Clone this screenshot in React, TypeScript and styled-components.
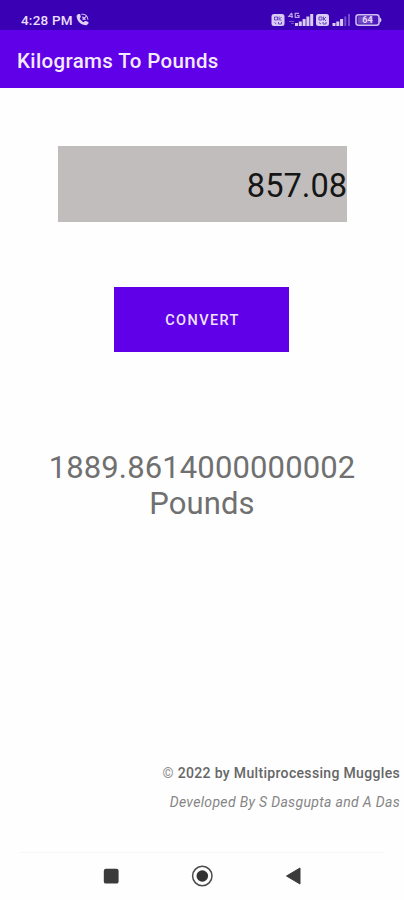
import React from "react";
import styled, { createGlobalStyle } from "styled-components";

const GlobalStyle = createGlobalStyle`
  * { box-sizing: border-box; }
  body { margin: 0; background: #fefefe; font-family: Roboto, sans-serif; }
`;

const Screen = styled.div`
  width: 404px;
  height: 900px;
  display: flex;
  flex-direction: column;
  background: #fefefe;
  overflow: hidden;
`;

const StatusBar = styled.header`
  height: 30px;
  flex: none;
  display: flex;
  align-items: flex-start;
  padding: 12px 21px 0 21px;
  background: #3a00b3;
  color: #e9defa;
`;

const Clock = styled.span`
  font-size: 13.5px;
  font-weight: 500;
  line-height: 17px;
  letter-spacing: 0.2px;
  white-space: nowrap;
`;

const CallIcon = styled.svg`
  margin: 1px 0 0 3px;
`;

const StatusIcons = styled.svg`
  margin-left: auto;
`;

const AppBar = styled.div`
  height: 58px;
  flex: none;
  display: flex;
  align-items: center;
  padding: 3px 17px 0;
  background: #6000e9;
`;

const Title = styled.h1`
  margin: 0;
  color: #f3eafd;
  font-size: 20.5px;
  font-weight: 500;
  letter-spacing: 0.36px;
  white-space: nowrap;
`;

const Content = styled.main`
  flex: 1;
  display: flex;
  flex-direction: column;
  align-items: center;
`;

const Amount = styled.input`
  width: 289px;
  height: 76px;
  margin: 58px 0 0 1px;
  padding: 3px 0 0;
  border: 0;
  outline: 0;
  border-radius: 0;
  background: #c0bdbc;
  color: #161616;
  font: 400 32.6px Roboto, sans-serif;
  text-align: right;
`;

const ConvertButton = styled.button`
  width: 175px;
  height: 65px;
  margin: 65px 1px 0 0;
  padding: 1px 0 0 2px;
  border: 0;
  background: #6000e9;
  color: #efe3fd;
  font: 500 14.5px Roboto, sans-serif;
  letter-spacing: 1.4px;
`;

const Result = styled.p`
  width: 330px;
  margin: 98px 0 0;
  color: #707070;
  font-size: 31px;
  line-height: 36px;
  letter-spacing: 0.13px;
  text-align: center;
`;

const Footer = styled.footer`
  align-self: stretch;
  margin-top: auto;
  padding: 0 4px 40px 0;
  display: flex;
  flex-direction: column;
  align-items: flex-end;
  gap: 9px;
  font-size: 14px;
  line-height: 20px;
  letter-spacing: 0.33px;
  white-space: nowrap;
`;

const Copyright = styled.span`
  color: #666;
  font-weight: 500;
`;

const CopyrightSign = styled.span`
  color: #8c8c8c;
  font-weight: 400;
`;

const Credits = styled.span`
  color: #858585;
  font-style: italic;
`;

const NavBar = styled.nav`
  height: 48px;
  flex: none;
  margin: 0 20px;
  padding-bottom: 2px;
  border-top: 1px solid #f6f6f6;
  display: flex;
  justify-content: center;
  align-items: center;
  gap: 69px;
`;

const NavIcon = styled.svg`
  width: 22px;
  height: 22px;
  flex: none;
`;

function SimBadge({ x }: { x: number }) {
  return (
    <g transform={`translate(${x} 2)`}>
      <rect width="13" height="12" rx="2.5" fill="#d8ccf4" />
      <path d="M3 3h3v3H3zM7.5 2.5v4M10 3 8 5l2 2M3 8.5l2 1.5M7 8v2h3V8" fill="none" stroke="#5325bd" strokeWidth="0.8" />
    </g>
  );
}

function Signals() {
  return (
    <StatusIcons width="112" height="16" viewBox="0 0 112 16">
      <SimBadge x={0.5} />
      <g fill="none" stroke="#b8a1e8" strokeWidth="1.2">
        <path d="M20.8 .8 17.800 4.500h4.200M21 1.500V6M28 1.400h-3.800v4H28V3.500H26" />
        <path d="M18 9.500h5M20 11.500h3" stroke="#7851cb" />
      </g>
      <g fill="#d8ccf4">
        <rect x="24" y="11" width="3" height="3" />
        <rect x="27.800" y="9.500" width="3" height="4.500" />
        <rect x="31.600" y="7" width="3" height="7" />
        <rect x="35.400" y="4.500" width="3" height="9.500" />
        <rect x="39.200" y="2" width="3" height="12" />
      </g>
      <SimBadge x={45} />
      <g fill="#d8ccf4">
        <rect x="61.500" y="11" width="3" height="3" />
        <rect x="65.300" y="9.500" width="3" height="4.500" />
        <rect x="69.100" y="7" width="3" height="7" />
        <rect x="73.300" y="4.500" width="2" height="9.500" fill="#754ccb" />
        <rect x="77" y="2" width="2" height="12" fill="#754ccb" />
      </g>
      <rect x="85" y="2.700" width="23" height="10.600" rx="2.500" fill="#4b1abb" stroke="#d0c0f2" strokeWidth="1.500" />
      <rect x="87" y="4.500" width="15" height="7" fill="#7148c8" />
      <path d="M108.500 5q4 3 0 6z" fill="#d8ccf4" />
      <text x="96.500" y="11.200" textAnchor="middle" fontFamily="Roboto, sans-serif" fontSize="9" fontWeight="700" fill="#e5daf8">64</text>
    </StatusIcons>
  );
}

export default function App() {
  return (
    <>
      <GlobalStyle />
      <Screen>
        <StatusBar>
          <Clock>4:28 PM</Clock>
          <CallIcon width="13" height="13" viewBox="0 0 24 24">
            <path
              d="M4 2 1 5C1.500 15 9 22.500 19.500 22.500L23 19.500v-3l-6-2-3 2.500C11 15 8.500 13 7 10L9 7 7.500 2z"
              fill="#dfd1f6"
            />
            <path d="M10 2.500q11-1 12 10M11 7.500q5 0 6 5M19 6l-6 6M13 8v4h4" fill="none" stroke="#c7b2ec" strokeWidth="2" />
          </CallIcon>
          <Signals />
        </StatusBar>
        <AppBar>
          <Title>Kilograms To Pounds</Title>
        </AppBar>
        <Content>
          <Amount type="text" defaultValue="857.08" aria-label="Kilograms" />
          <ConvertButton type="button">CONVERT</ConvertButton>
          <Result>1889.8614000000002 Pounds</Result>
          <Footer>
            <Copyright>
              <CopyrightSign>©</CopyrightSign> 2022 by Multiprocessing Muggles
            </Copyright>
            <Credits>Developed By S Dasgupta and A Das</Credits>
          </Footer>
        </Content>
        <NavBar>
          <NavIcon viewBox="0 0 22 22">
            <rect x="3.800" y="3.800" width="14.800" height="14.800" rx="2.200" fill="#3b3b3b" />
          </NavIcon>
          <NavIcon viewBox="0 0 22 22">
            <circle cx="11.300" cy="11" r="9.700" fill="none" stroke="#4b4b4b" strokeWidth="1.500" />
            <circle cx="11.300" cy="11" r="5.800" fill="#333" />
          </NavIcon>
          <NavIcon viewBox="0 0 22 22">
            <path d="M18 3v16L4.500 11z" fill="#3b3b3b" stroke="#3b3b3b" strokeLinejoin="round" />
          </NavIcon>
        </NavBar>
      </Screen>
    </>
  );
}
